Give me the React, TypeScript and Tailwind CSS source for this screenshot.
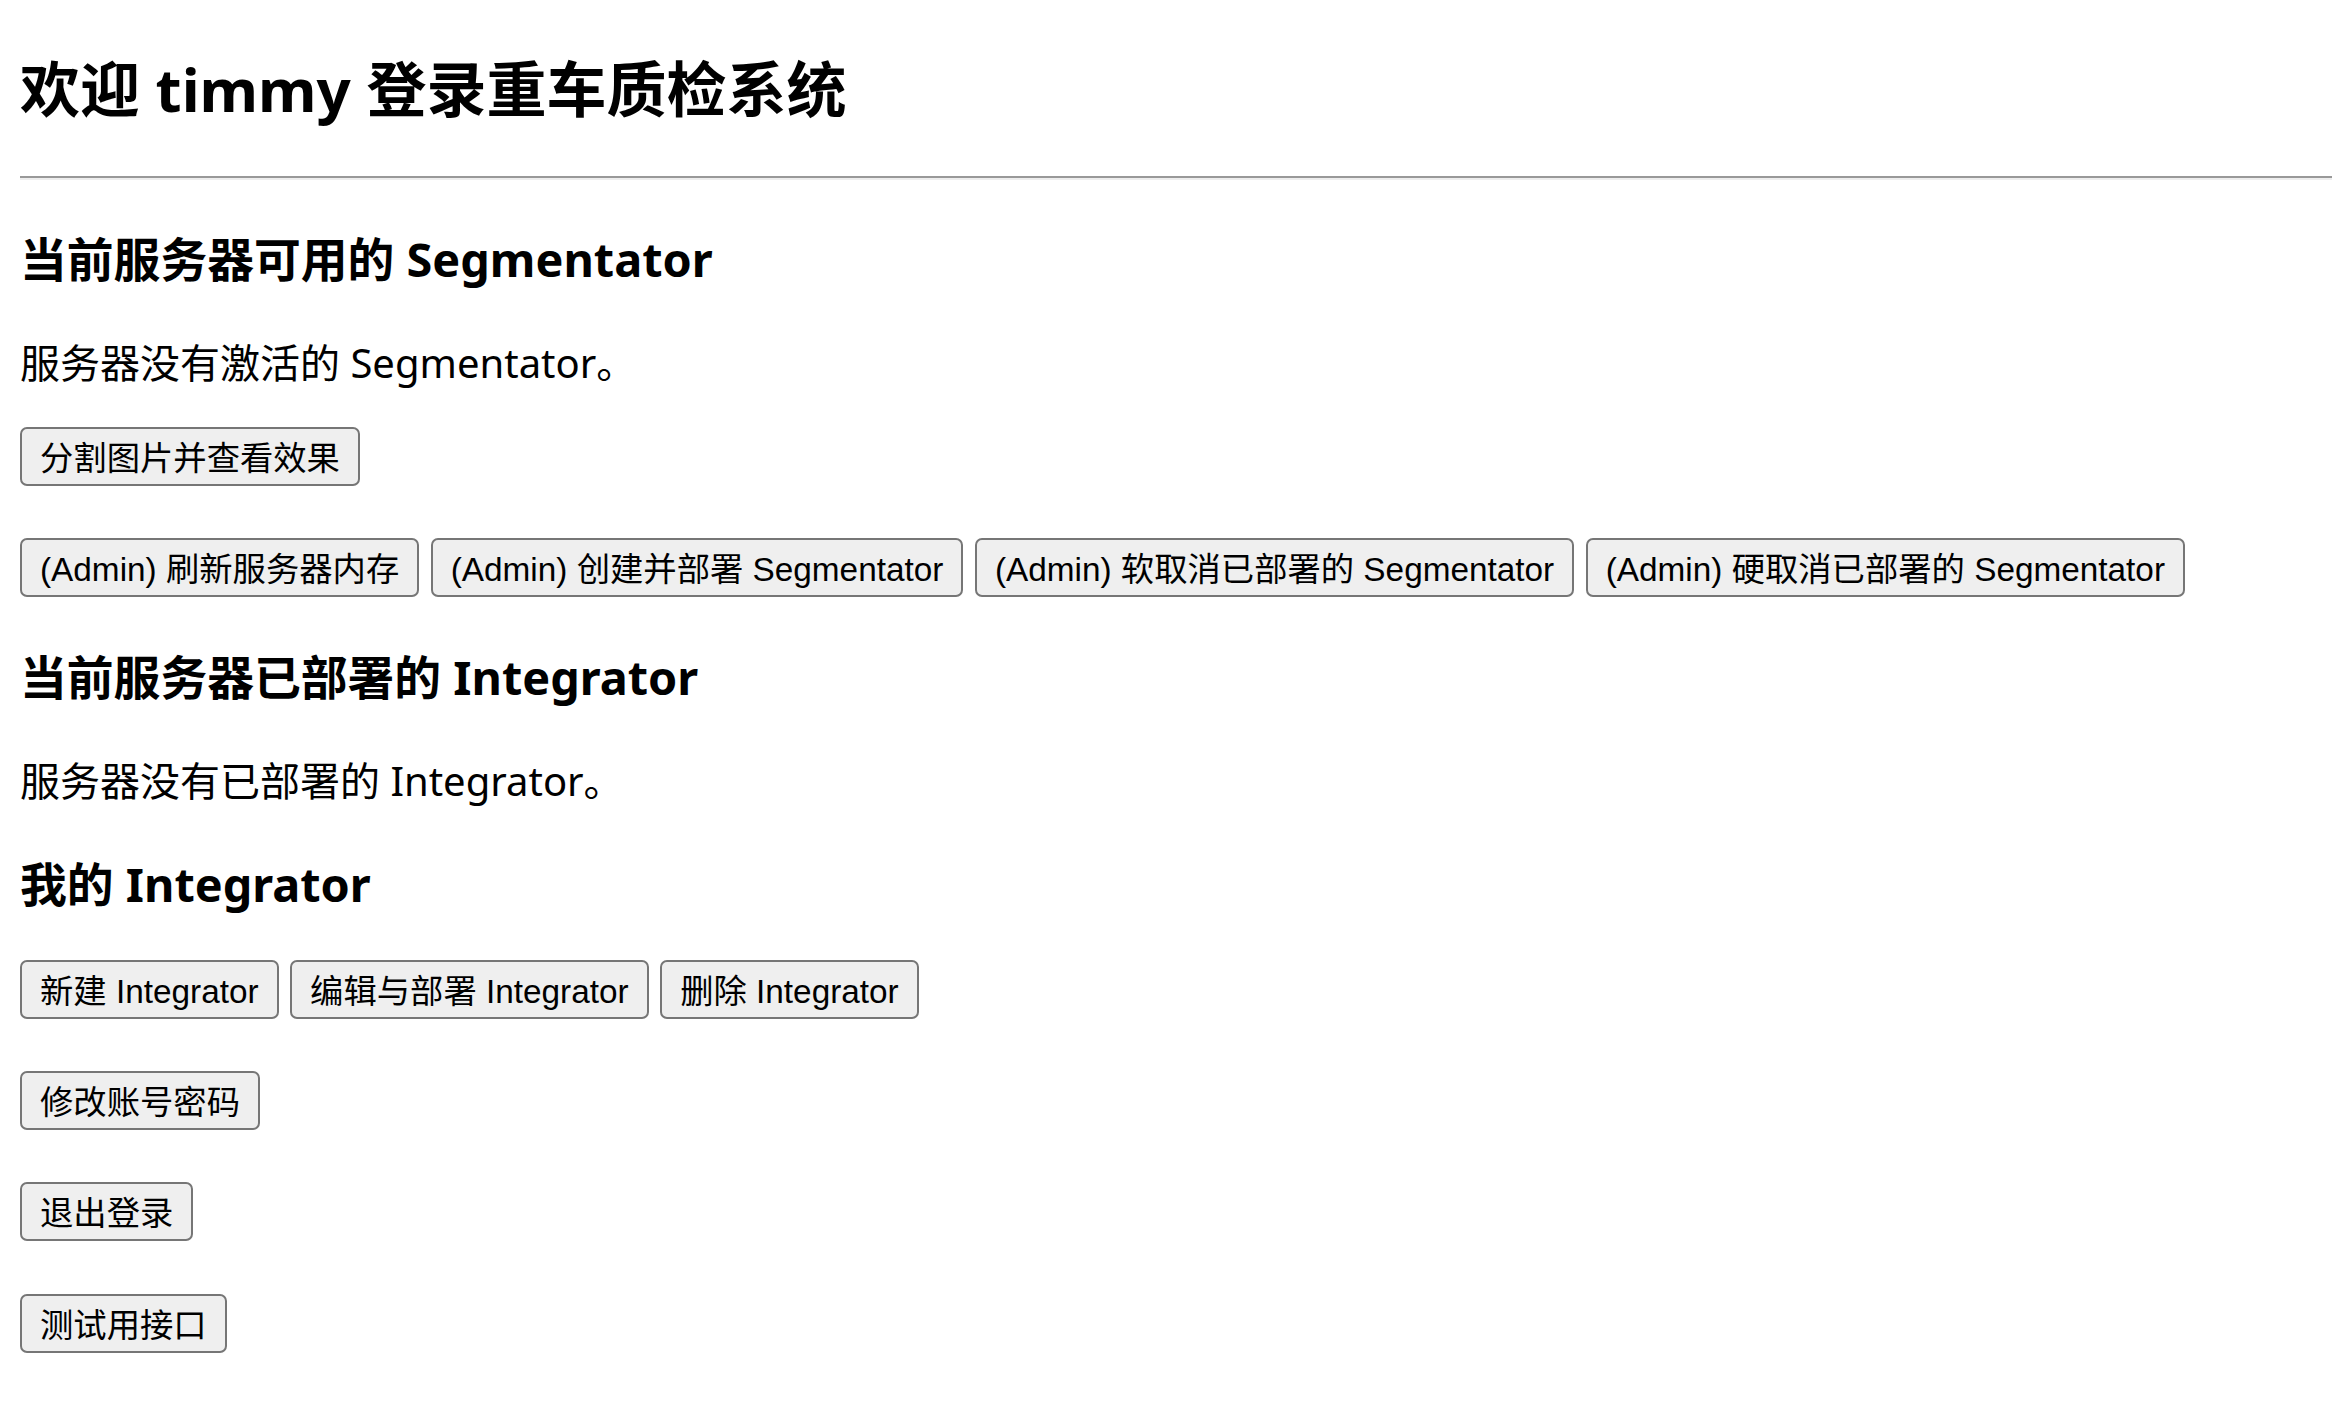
const heading = '[font-family:"Noto_Sans","Noto_Sans_CJK_SC",sans-serif]';

function Btn({ children }: { children: React.ReactNode }) {
  return (
    <button className='h-[59px] px-[18px] pt-[4px] border-2 border-[#767676] rounded-[7px] bg-[#efefef] text-black text-[33.33px] leading-none whitespace-nowrap [font-family:"Liberation_Sans","Noto_Sans_CJK_SC",sans-serif]'>
      {children}
    </button>
  );
}

export default function App() {
  return (
    <div className={`min-h-screen bg-white text-black pl-5 ${heading}`}>
      <div className="pt-[50px]">
        {/* Title */}
        <h1 className="text-[60px] font-bold leading-[78px]">欢迎 timmy 登录重车质检系统</h1>
        <hr className="mt-[48px] border-0 border-t-2 border-t-[#999999] border-b-2 border-b-[#eeeeee]" />

        {/* Segmentator */}
        <h3 className="mt-[48px] text-[46.8px] font-bold leading-[62px]">当前服务器可用的 Segmentator</h3>
        <p className="mt-[46px] text-[40px] leading-[53px]">服务器没有激活的 Segmentator。</p>
        <div className="mt-[38px] flex">
          <Btn>分割图片并查看效果</Btn>
        </div>
        <div className="mt-[52px] flex gap-[11.5px]">
          <Btn>(Admin) 刷新服务器内存</Btn>
          <Btn>(Admin) 创建并部署 Segmentator</Btn>
          <Btn>(Admin) 软取消已部署的 Segmentator</Btn>
          <Btn>(Admin) 硬取消已部署的 Segmentator</Btn>
        </div>

        {/* Integrator */}
        <h3 className="mt-[49px] text-[46.8px] font-bold leading-[62px]">当前服务器已部署的 Integrator</h3>
        <p className="mt-[46px] text-[40px] leading-[53px]">服务器没有已部署的 Integrator。</p>
        <h3 className="mt-[46px] text-[46.8px] font-bold leading-[62px]">我的 Integrator</h3>
        <div className="mt-[45px] flex gap-[11.5px]">
          <Btn>新建 Integrator</Btn>
          <Btn>编辑与部署 Integrator</Btn>
          <Btn>删除 Integrator</Btn>
        </div>

        {/* Account */}
        <div className="mt-[52px] flex">
          <Btn>修改账号密码</Btn>
        </div>
        <div className="mt-[52px] flex">
          <Btn>退出登录</Btn>
        </div>
        <div className="mt-[53px] flex">
          <Btn>测试用接口</Btn>
        </div>
      </div>
    </div>
  );
}
